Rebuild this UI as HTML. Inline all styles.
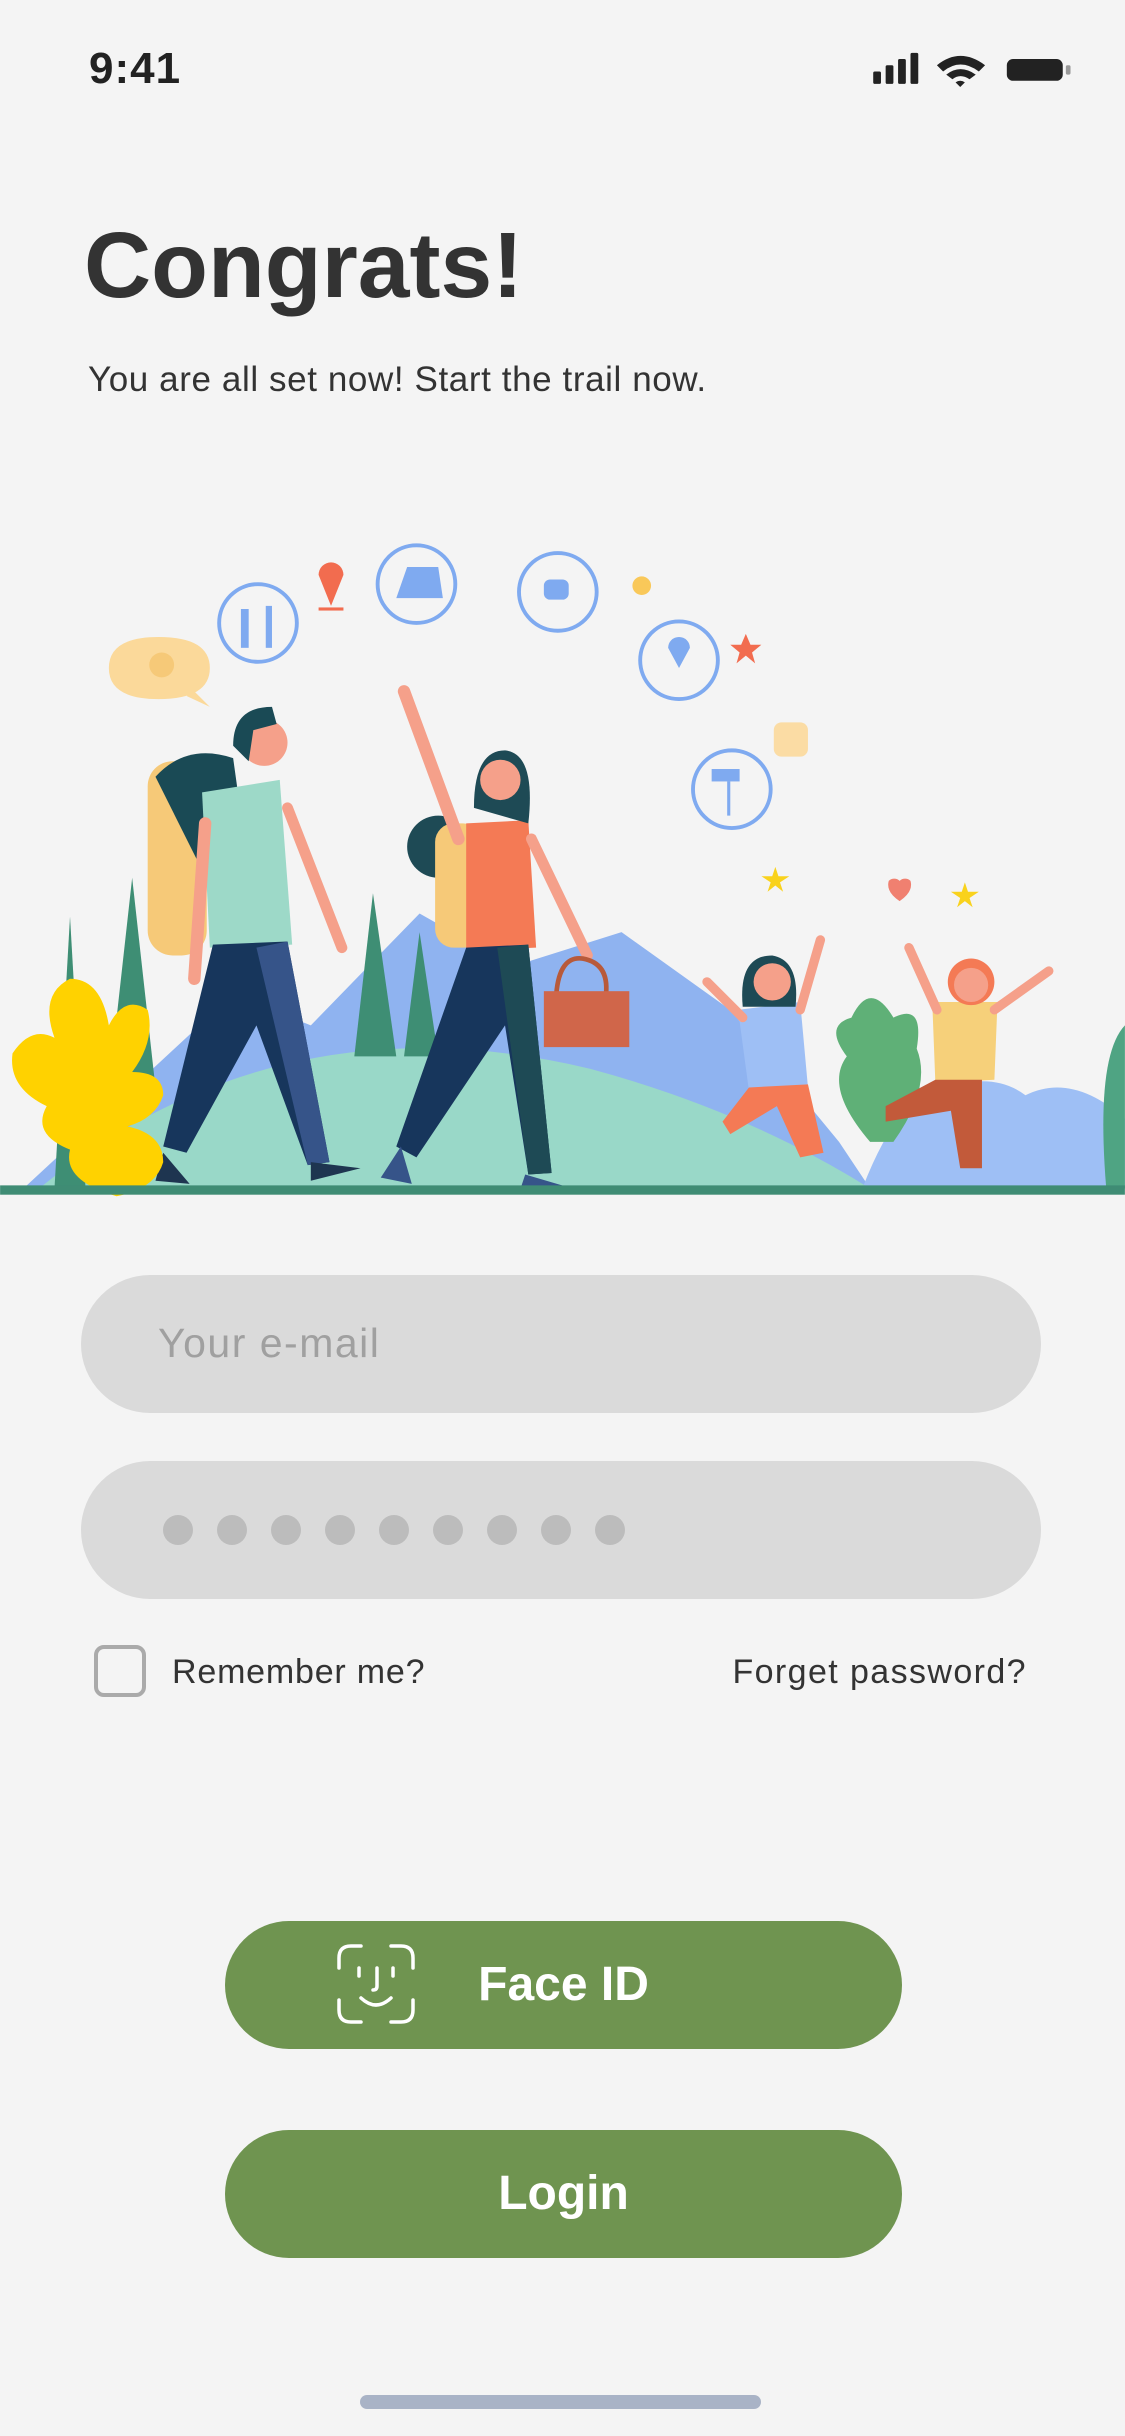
<!DOCTYPE html>
<html><head><meta charset="utf-8">
<style>
html,body{margin:0;padding:0}
body{width:1125px;height:2436px;background:#f4f4f4;position:relative;overflow:hidden;font-family:"Liberation Sans",sans-serif}
.abs{position:absolute}
.time{left:89px;top:44px;font-size:44px;font-weight:bold;color:#222;letter-spacing:1px}
h1{position:absolute;left:84px;top:212px;margin:0;font-size:93px;font-weight:bold;color:#333;letter-spacing:0}
.sub{left:88px;top:360px;font-size:35px;color:#333;letter-spacing:0.6px}
.field{left:81px;width:960px;height:138px;border-radius:69px;background:#dadada}
.ph{left:158px;top:1320px;font-size:41px;color:#a0a0a0;letter-spacing:1.5px}
.dot{width:30px;height:30px;border-radius:50%;background:#bcbcbc;top:1515px}
.cb{left:94px;top:1645px;width:52px;height:52px;border:4px solid #aaa;border-radius:10px;box-sizing:border-box}
.lbl{top:1653px;font-size:34px;color:#333}
.btn{left:225px;width:677px;height:128px;border-radius:64px;background:#6f9450;color:#fff;font-weight:bold;font-size:48px;text-align:center;line-height:128px}
.home{left:360px;top:2395px;width:401px;height:14px;border-radius:7px;background:#a9b3c6}
</style></head><body>
<div class="abs time">9:41</div>
<h1>Congrats!</h1>
<div class="abs sub">You are all set now! Start the trail now.</div>

<svg class="abs" style="left:0;top:0" width="1125" height="2436" viewBox="0 0 724 1568">
<rect x="562" y="46" width="5" height="8" rx="1" fill="#222"/>
<rect x="570" y="42" width="5" height="12" rx="1" fill="#222"/>
<rect x="578" y="38" width="5" height="16" rx="1" fill="#222"/>
<rect x="586" y="34" width="5" height="20" rx="1" fill="#222"/>
<path d="M603 42 Q618 30 634 42 L630 46 Q618 37 607 46Z M609 48 Q618 41 628 48 L624 51 Q618 47 613 51Z M615 53 L618 56 L621 53 Q618 51 615 53Z" fill="#222"/>
<rect x="648" y="38" width="36" height="14" rx="4" fill="#222"/>
<rect x="686" y="42" width="3" height="6" rx="1" fill="#999"/>
<path d="M15 765 L150 640 L200 660 L270 588 L330 622 L400 600 L470 650 L540 735 L560 765Z" fill="#8fb3f0"/>
<path d="M555 765 Q580 700 610 700 Q640 690 660 705 Q690 690 724 720 L724 765Z" fill="#9ebff5"/>
<path d="M25 765 Q180 640 380 688 Q480 715 560 765Z" fill="#99d8c8"/>
<polygon points="45,590 35,765 55,765" fill="#3e8e74"/>
<polygon points="85,565 70,700 100,700" fill="#3e8e74"/>
<polygon points="240,575 228,680 255,680" fill="#3e8e74"/>
<polygon points="270,600 260,680 282,680" fill="#3e8e74"/>
<path d="M712 765 Q705 680 724 660 L724 765Z" fill="#4fa483"/>
<path d="M560 735 Q530 700 545 680 Q530 660 548 655 Q560 630 575 655 Q595 645 590 675 Q600 700 575 735Z" fill="#5fb077"/>
<rect x="95" y="490" width="38" height="125" rx="16" fill="#f6c978"/>
<path d="M100 500 Q120 478 150 488 L160 560 L130 560Z" fill="#1a4a55"/>
<path d="M130 510 L180 502 L188 608 L135 610Z" fill="#9dd9c8"/>
<path d="M137 608 L185 606 L212 748 L198 750 L165 660 L120 742 L105 738Z" fill="#17365c"/>
<path d="M165 610 L185 606 L212 748 L198 750Z" fill="#365489"/>
<path d="M185 520 L220 610" stroke="#f5a08a" stroke-width="7" stroke-linecap="round"/>
<path d="M132 530 L125 630" stroke="#f5a08a" stroke-width="8" stroke-linecap="round"/>
<circle cx="170" cy="478" r="15" fill="#f5a08a"/>
<path d="M150 480 Q150 455 175 455 L178 466 L163 470 L160 490Z" fill="#1a4a55"/>
<path d="M105 742 L100 760 L122 762Z M200 748 L200 760 L232 752Z" fill="#1e3550"/>
<circle cx="282" cy="545" r="20" fill="#1e4a55"/>
<rect x="280" y="530" width="30" height="80" rx="12" fill="#f6c978"/>
<path d="M300 530 L340 528 L345 610 L300 612Z" fill="#f47a55"/>
<path d="M300 610 L340 608 L355 755 L340 756 L325 660 L268 745 L255 738Z" fill="#17365c"/>
<path d="M320 610 L340 608 L355 755 L340 756Z" fill="#1e4a55"/>
<path d="M295 540 L260 445" stroke="#f5a08a" stroke-width="8" stroke-linecap="round"/>
<path d="M342 540 L378 615" stroke="#f5a08a" stroke-width="7" stroke-linecap="round"/>
<path d="M305 520 Q305 483 325 483 Q345 485 340 530Z" fill="#1e4a55"/>
<circle cx="322" cy="502" r="13" fill="#f5a08a"/>
<path d="M258 738 L245 758 L265 762Z M338 756 L335 765 L365 764Z" fill="#365489"/>
<path d="M358 640 Q360 615 375 617 Q392 620 390 640" stroke="#b85a3a" stroke-width="3" fill="none"/>
<rect x="350" y="638" width="55" height="36" fill="#d0664a"/>
<path d="M475 650 L515 645 L520 700 L482 702Z" fill="#9ebff5"/>
<path d="M482 700 L520 698 L530 742 L515 745 L500 712 L470 730 L465 722Z" fill="#f47a55"/>
<path d="M478 655 L455 632 M515 650 L528 605" stroke="#f5a08a" stroke-width="6" stroke-linecap="round"/>
<path d="M478 648 Q475 615 497 615 Q515 618 512 648Z" fill="#1e4a55"/>
<circle cx="497" cy="632" r="12" fill="#f5a08a"/>
<path d="M600 645 L642 645 L640 695 L602 697Z" fill="#f6d07a"/>
<path d="M602 695 L632 695 L632 752 L618 752 L612 715 L570 722 L570 712Z" fill="#c25a3a"/>
<path d="M603 650 L585 610 M640 650 L675 625" stroke="#f5a08a" stroke-width="6" stroke-linecap="round"/>
<circle cx="625" cy="632" r="15" fill="#f47a55"/>
<circle cx="625" cy="634" r="11" fill="#f5a08a"/>
<path d="M75 770 Q40 760 45 740 Q20 730 30 712 Q5 700 8 678 Q20 660 35 668 Q25 640 45 630 Q65 630 70 660 Q80 640 95 650 Q100 670 85 690 Q105 690 105 705 Q100 720 82 725 Q105 730 105 748 Q100 765 75 770Z" fill="#ffd200"/>
<rect x="0" y="763" width="724" height="6" fill="#3f8c74"/>
<g fill="none" stroke="#7faaf0" stroke-width="2.5">
<circle cx="166" cy="401" r="25"/><circle cx="268" cy="376" r="25"/><circle cx="359" cy="381" r="25"/><circle cx="437" cy="425" r="25"/><circle cx="471" cy="508" r="25"/>
</g>
<g fill="#7faaf0">
<rect x="155" y="392" width="5" height="25"/><rect x="171" y="390" width="4" height="27"/>
<polygon points="255,385 262,365 282,365 285,385"/>
<rect x="350" y="373" width="16" height="13" rx="4"/>
<path d="M437 410 a7 7 0 0 1 7 7 L437 430 L430 417 a7 7 0 0 1 7 -7Z"/>
<rect x="458" y="495" width="18" height="8"/><rect x="468" y="503" width="2" height="22"/>
</g>
<path d="M213 362 a8 8 0 0 1 8 8 L213 390 L205 370 a8 8 0 0 1 8 -8Z" fill="#f26c4f"/>
<rect x="205" y="391" width="16" height="2" fill="#f26c4f"/>
<path d="M102 410 Q135 410 135 430 Q135 450 102 450 Q70 450 70 430 Q70 410 102 410Z M125 445 L135 455 L120 448Z" fill="#fbd99a"/>
<circle cx="104" cy="428" r="8" fill="#f6c978"/>
<circle cx="413" cy="377" r="6" fill="#f9c859"/>
<polygon points="480,408 483,415 490,415 484,420 486,427 480,422 474,427 476,420 470,415 477,415" fill="#f26c4f"/>
<polygon points="499,558 501,564 508,564 502,568 504,574 499,570 494,574 496,568 490,564 497,564" fill="#f9d21c"/>
<polygon points="621,568 623,574 630,574 624,578 626,584 621,580 616,584 618,578 612,574 619,574" fill="#f9d21c"/>
<rect x="498" y="465" width="22" height="22" rx="5" fill="#fbdca4"/>
<path d="M572 567 a5 5 0 0 1 7 0 a5 5 0 0 1 7 0 Q588 574 579 580 Q570 574 572 567Z" fill="#f08070"/>
</svg>

<div class="abs field" style="top:1275px"></div>
<div class="abs ph">Your e-mail</div>
<div class="abs field" style="top:1461px"></div>
<div class="abs dot" style="left:163px"></div>
<div class="abs dot" style="left:217px"></div>
<div class="abs dot" style="left:271px"></div>
<div class="abs dot" style="left:325px"></div>
<div class="abs dot" style="left:379px"></div>
<div class="abs dot" style="left:433px"></div>
<div class="abs dot" style="left:487px"></div>
<div class="abs dot" style="left:541px"></div>
<div class="abs dot" style="left:595px"></div>
<div class="abs cb"></div>
<div class="abs lbl" style="left:172px;letter-spacing:0.8px">Remember me?</div>
<div class="abs lbl" style="right:98px;letter-spacing:1.4px">Forget password?</div>

<div class="abs btn" style="top:1921px">Face ID</div>
<svg class="abs" style="left:337px;top:1944px" width="78" height="80" viewBox="0 0 78 80" fill="none" stroke="#fff" stroke-width="3.5" stroke-linecap="round">
<path d="M2 24 V14 Q2 2 14 2 H24"/><path d="M54 2 H64 Q76 2 76 14 V24"/>
<path d="M2 56 V66 Q2 78 14 78 H24"/><path d="M76 56 V66 Q76 78 64 78 H54"/>
<path d="M22 24 V32"/><path d="M56 24 V32"/><path d="M40 24 V42 Q40 46 36 46"/>
<path d="M24 54 Q39 68 54 54"/>
</svg>
<div class="abs btn" style="top:2130px">Login</div>
<div class="abs home"></div>
</body></html>
